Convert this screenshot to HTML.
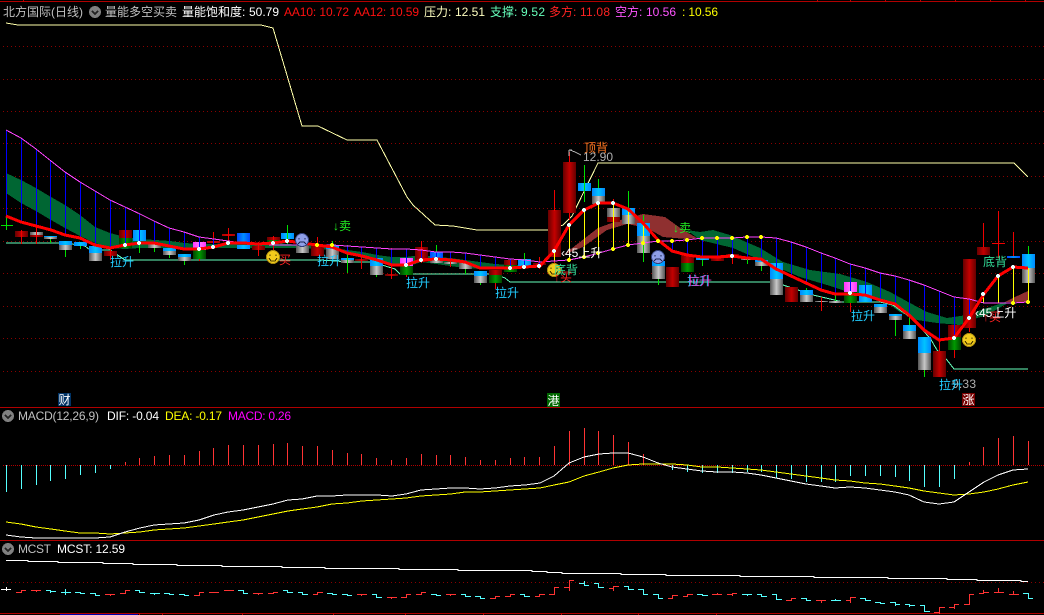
<!DOCTYPE html>
<html><head><meta charset="utf-8">
<style>
html,body{margin:0;padding:0;background:#000;width:1044px;height:615px;overflow:hidden}
svg{display:block;position:absolute;left:0;top:0}
text{font-family:"Liberation Sans","Noto Sans CJK SC",sans-serif;font-size:12px}
.r{fill:url(#gr)}.g{fill:url(#gg)}.b{fill:url(#gb)}.y{fill:url(#gy)}.m{fill:url(#gm)}.u{fill:url(#gu)}
</style></head><body>
<svg width="1044" height="615" viewBox="0 0 1044 615" xmlns="http://www.w3.org/2000/svg">
<defs>
<linearGradient id="gr"><stop offset="0" stop-color="#660000"/><stop offset=".5" stop-color="#c40000"/><stop offset="1" stop-color="#660000"/></linearGradient>
<linearGradient id="gg"><stop offset="0" stop-color="#004400"/><stop offset=".5" stop-color="#009a00"/><stop offset="1" stop-color="#004400"/></linearGradient>
<linearGradient id="gb"><stop offset="0" stop-color="#0088ff"/><stop offset=".5" stop-color="#00c4ff"/><stop offset="1" stop-color="#0088ff"/></linearGradient>
<linearGradient id="gy"><stop offset="0" stop-color="#555"/><stop offset=".5" stop-color="#c8c8c8"/><stop offset="1" stop-color="#555"/></linearGradient>
<linearGradient id="gm"><stop offset="0" stop-color="#ff33ff"/><stop offset=".5" stop-color="#ff77ff"/><stop offset="1" stop-color="#ff33ff"/></linearGradient>
<linearGradient id="gu"><stop offset="0" stop-color="#0044ff"/><stop offset=".5" stop-color="#0090ff"/><stop offset="1" stop-color="#0044ff"/></linearGradient>
</defs>
<g shape-rendering="crispEdges">
<!-- frame -->
<path d="M0 1.5H1044M0 407.5H1044M0 540.5H1044M0 613.5H1044" stroke="#b00000" fill="none"/>
<path d="M23.5 0V2M817.5 0V2M850.5 0V2M885.5 0V2M920.5 0V2M955.5 0V2M990.5 0V2M1025.5 0V2M139.5 613V615M162.5 613V615M242.5 613V615M333.5 613V615M405.5 613V615M483.5 613V615M561.5 613V615M638.5 613V615M716.5 613V615" stroke="#c00000"/>
<path d="M60 614.5H138" stroke="#0000aa"/>
<!-- grid -->
<path d="M3 46.5H1044M3 79.5H1044M3 111.5H1044M3 143.5H1044M3 176.5H1044M3 208.5H1044M3 241.5H1044M3 273.5H1044M3 306.5H1044M3 338.5H1044M3 371.5H1044M3 582.5H1044" stroke="#8a0000" stroke-dasharray="1 3" fill="none"/>
<path d="M3 465.5H1044" stroke="#b00000" stroke-dasharray="1 1" fill="none"/>
<!-- pressure line -->
<polyline fill="none" stroke="#ffffaa" points="6,23 18,25 261,25 273,28 302,126 318,126 347,140 377,140 407,197 413,205 435,225 453,226 477,230 550,230 563,225 572,216 598,163 1014,163 1028,177"/>
<!-- bands -->
<polygon fill="#006633" points="6,173 21,180 36,188 51,197 65,205 80,215 95,227 110,233 125,237 140,239 155,240 170,241 185,243 199,244 214,244 228,243 243,243 258,243 273,243 288,244 302,245 317,246 332,248 347,250 362,252 377,255 392,257 406,257 421,255 436,257 450,258 465,260 480,262 495,264 510,265 525,265 540,267 525,268 510,268 495,269 480,269 465,268 450,266 436,264 421,262 406,267 392,264 377,262 362,258 347,252 332,250 317,249 302,248 288,248 273,248 258,248 243,248 228,248 214,248 199,248 185,248 170,248 155,248 140,248 125,249 110,248 95,243 80,236 65,228 51,220 36,211 21,203 6,193"/>
<polygon fill="#006633" points="687,230 700,232 713,230 730,235 760,248 783,262 810,270 840,274 867,282 890,292 910,303 927,312 947,318 967,315 987,308 1005,302 1008,303 985,316 977,318 960,325 937,323 917,320 900,312 883,300 857,295 827,285 800,277 767,263 733,248 700,240"/>
<polygon fill="#8f3030" points="563,255 580,242 598,228 617,221 643,214 665,217 683,230 697,238 687,239 663,237 647,228 627,224 607,230 583,247"/>
<polygon fill="#8f3030" points="1005,302 1015,297 1028,291 1028,302"/>
<!-- support line -->
<polyline fill="none" stroke="#66ffbb" points="6,243 60,243 65,243 85,246 90,250 110,250 125,260 320,260 350,262 372,262 395,269 400,274 495,274 505,278 510,282 770,282 783,285 813,295 843,302 880,302 893,305 907,315 913,320 930,338 937,350 947,360 954,369 1028,369"/>
<!-- candles -->
<rect x="15" y="231" width="13" height="6" class="r"/>
<rect x="30" y="232" width="13" height="3" class="y"/><rect x="30" y="235" width="13" height="2" class="r"/>
<rect x="44" y="236" width="13" height="1" class="b"/><rect x="44" y="237" width="13" height="2" class="y"/>
<rect x="59" y="241" width="13" height="4" class="b"/><rect x="59" y="245" width="13" height="5" class="y"/>
<rect x="74" y="242" width="13" height="4" class="b"/>
<rect x="89" y="246" width="13" height="7" class="b"/><rect x="89" y="253" width="13" height="8" class="y"/>
<rect x="104" y="251" width="13" height="5" class="r"/>
<rect x="119" y="230" width="13" height="8" class="r"/><rect x="119" y="238" width="13" height="10" class="g"/>
<rect x="133" y="230" width="13" height="11" class="b"/>
<rect x="148" y="244" width="13" height="4" class="y"/>
<rect x="163" y="248" width="13" height="3" class="b"/><rect x="163" y="251" width="13" height="4" class="y"/>
<rect x="178" y="254" width="13" height="3" class="b"/><rect x="178" y="257" width="13" height="4" class="y"/>
<rect x="193" y="242" width="13" height="8" class="m"/><rect x="193" y="250" width="13" height="9" class="g"/>
<rect x="207" y="241" width="13" height="2" class="r"/>
<rect x="222" y="234" width="13" height="2" class="r"/>
<rect x="237" y="233" width="13" height="9" class="u"/><rect x="237" y="245" width="13" height="4" class="b"/>
<rect x="252" y="246" width="13" height="4" class="r"/>
<rect x="267" y="237" width="13" height="3" class="r"/><rect x="267" y="240" width="13" height="5" class="g"/>
<rect x="281" y="233" width="13" height="6" class="b"/>
<rect x="296" y="246" width="13" height="7" class="y"/>
<rect x="311" y="246" width="13" height="10" class="r"/>
<rect x="326" y="245" width="13" height="4" class="b"/><rect x="326" y="249" width="13" height="10" class="y"/>
<rect x="341" y="258" width="13" height="2" class="b"/><rect x="341" y="260" width="13" height="3" class="y"/>
<rect x="355" y="259" width="13" height="2" class="r"/>
<rect x="370" y="258" width="13" height="8" class="b"/><rect x="370" y="266" width="13" height="9" class="y"/>
<rect x="385" y="274" width="13" height="2" class="r"/>
<rect x="400" y="258" width="13" height="8" class="m"/><rect x="400" y="266" width="13" height="9" class="g"/>
<rect x="415" y="247" width="13" height="15" class="r"/>
<rect x="430" y="252" width="13" height="6" class="u"/><rect x="430" y="258" width="13" height="5" class="y"/>
<rect x="444" y="262" width="13" height="2" class="y"/>
<rect x="459" y="263" width="13" height="6" class="y"/>
<rect x="474" y="271" width="13" height="5" class="b"/><rect x="474" y="276" width="13" height="7" class="y"/>
<rect x="489" y="270" width="13" height="5" class="r"/><rect x="489" y="275" width="13" height="8" class="g"/>
<rect x="504" y="260" width="13" height="5" class="r"/><rect x="504" y="265" width="13" height="7" class="g"/>
<rect x="518" y="259" width="13" height="8" class="b"/>
<rect x="533" y="263" width="13" height="2" class="r"/>
<rect x="548" y="210" width="13" height="47" class="r"/>
<rect x="563" y="162" width="13" height="51" class="r"/>
<rect x="578" y="183" width="13" height="8" class="b"/>
<rect x="592" y="188" width="13" height="8" class="b"/><rect x="592" y="196" width="13" height="8" class="y"/>
<rect x="607" y="208" width="13" height="9" class="y"/><rect x="607" y="217" width="13" height="5" class="r"/>
<rect x="622" y="208" width="13" height="7" class="b"/><rect x="622" y="215" width="13" height="9" class="y"/>
<rect x="637" y="223" width="13" height="13" class="b"/><rect x="637" y="236" width="13" height="17" class="y"/>
<rect x="652" y="261" width="13" height="5" class="b"/><rect x="652" y="266" width="13" height="13" class="y"/>
<rect x="666" y="267" width="13" height="20" class="r"/>
<rect x="681" y="255" width="13" height="8" class="r"/><rect x="681" y="263" width="13" height="9" class="g"/>
<rect x="696" y="257" width="13" height="3" class="b"/>
<rect x="711" y="257" width="13" height="4" class="r"/>
<rect x="726" y="254" width="13" height="4" class="r"/>
<rect x="741" y="257" width="13" height="3" class="y"/>
<rect x="755" y="260" width="13" height="2" class="b"/><rect x="755" y="262" width="13" height="4" class="y"/>
<rect x="770" y="263" width="13" height="16" class="b"/><rect x="770" y="279" width="13" height="16" class="y"/>
<rect x="785" y="287" width="13" height="15" class="r"/>
<rect x="800" y="290" width="13" height="5" class="b"/><rect x="800" y="295" width="13" height="7" class="y"/>
<rect x="815" y="301" width="13" height="1" class="y"/>
<rect x="829" y="301" width="13" height="2" class="y"/>
<rect x="844" y="282" width="13" height="10" class="m"/><rect x="844" y="292" width="13" height="11" class="g"/>
<rect x="859" y="285" width="13" height="17" class="b"/>
<rect x="874" y="304" width="13" height="3" class="b"/><rect x="874" y="307" width="13" height="6" class="y"/>
<rect x="889" y="314" width="13" height="2" class="b"/><rect x="889" y="316" width="13" height="4" class="y"/>
<rect x="903" y="325" width="13" height="6" class="b"/><rect x="903" y="331" width="13" height="8" class="y"/>
<rect x="918" y="337" width="13" height="16" class="b"/><rect x="918" y="353" width="13" height="17" class="y"/>
<rect x="933" y="351" width="13" height="26" class="r"/>
<rect x="948" y="325" width="13" height="12" class="r"/><rect x="948" y="337" width="13" height="13" class="g"/>
<rect x="963" y="259" width="13" height="69" class="r"/>
<rect x="977" y="247" width="13" height="8" class="r"/>
<rect x="992" y="243" width="13" height="1" fill="#c00000"/>
<rect x="1007" y="256" width="13" height="2" class="u"/>
<rect x="1022" y="254" width="13" height="14" class="b"/><rect x="1022" y="268" width="13" height="15" class="y"/>
<!-- wicks -->
<path fill="none" stroke="#f00000" d="M21.5 230V244M36.5 227V244M110.5 247V260M199.5 259V261M213.5 232V248M207 242H220M228.5 228V245M222 235H235M258.5 242V256M273.5 236V250M317.5 237V246M361.5 247V269M391.5 248V279M406.5 275V277M421.5 241V263M450.5 252V267M495.5 283V289M539.5 257V269M554.5 190V211M554.5 257V270M569.5 152V162M569.5 213V220M613.5 199V208M732.5 258V264M821.5 297V311M850.5 303V312M954.5 350V358M969.5 328V332M983.5 223V247M998.5 211V258M992 243.5H1005M1013.5 232V256M939.5 320V351"/>
<path fill="none" stroke="#00e000" d="M6.5 212V230M1 225.5H13M50.5 239V243M65.5 250V257M80.5 246V249M139.5 241V253M154.5 248V252M169.5 255V258M184.5 261V265M287.5 225V244M332.5 241V244M347.5 245V273M376.5 275V277M436.5 245V252M465.5 253V263M465.5 269V274M480.5 283V285M524.5 253V267M584.5 165V202M598.5 179V188M628.5 191V208M643.5 215V262M658.5 279V285M702.5 260V266M747.5 258V264M761.5 266V271M806.5 288V290M835.5 295V301M895.5 320V336M909.5 317V325M924.5 370V377M1028.5 246V254"/>
<!-- stems -->
<path fill="none" stroke="#0000ff" d="M6.5 130V216M21.5 138V222M36.5 149V226M50.5 161V230M65.5 172V235M80.5 182V238M95.5 191V245M110.5 200V248M125.5 207V245M139.5 214V243M154.5 221V243M169.5 228V246M184.5 232V249M199.5 237V249M213.5 239V247M228.5 241V243M258.5 244V245M302.5 245V246M332.5 245V247M347.5 246V253M361.5 247V256M376.5 248V260M391.5 249V265M406.5 249V265M421.5 250V260M436.5 252V259M450.5 252V260M465.5 253V262M480.5 255V268M495.5 257V268M510.5 259V268M524.5 260V267M539.5 262V266M672.5 241V251M687.5 240V255M702.5 238V257M717.5 238V257M732.5 238V256M747.5 237V258M761.5 237V259M776.5 238V269M791.5 242V276M806.5 247V283M821.5 253V290M835.5 258V294M850.5 264V294M865.5 268V295M880.5 273V300M895.5 276V304M909.5 280V315M924.5 285V330M939.5 291V340M954.5 297V338M969.5 299V318"/>
<path fill="none" stroke="#ffff00" d="M554.5 251V261M569.5 225V260M584.5 210V257M598.5 203V253M613.5 203V249M628.5 209V245M643.5 223V243M983.5 294V303M998.5 276V303M1013.5 267V303M1028.5 268V302"/>
<!-- magenta line -->
<polyline fill="none" stroke="#ff44ff" points="6,130 21,138 36,149 51,161 65,172 80,182 95,191 110,200 125,207 140,214 154,221 169,228 184,232 199,237 214,239 228,241 243,243 258,244 273,245 288,245 302,245 317,245 332,245 347,246 362,247 377,248 392,249 406,249 421,250 436,252 451,252 465,253 480,255 495,257 510,259 525,260 540,262 554,261 569,260 584,257 599,253 613,249 628,245 643,243 658,241 672,241 687,240 702,238 717,238 732,238 747,237 761,237 776,238 791,242 806,247 821,253 835,258 850,264 865,268 880,273 895,276 909,280 924,285 939,291 954,297 969,299 984,303 998,303 1013,303 1028,302"/>
<!-- red line -->
<polyline fill="none" stroke="#ff0000" stroke-width="3" points="6,216 21,222 36,226 51,230 65,235 80,238 95,245 110,248 125,245 140,243 154,243 169,246 184,249 199,249 214,247 228,243 243,243 258,244 273,243 288,241 302,243 317,245 332,247 347,253 362,256 377,260 392,265 406,265 421,260 436,259 451,260 465,262 480,268 495,268 510,268 525,267 540,266 554,251 569,225 584,210 599,203 613,203 628,209 643,223 658,240 672,251 687,255 702,257 717,257 732,256 747,258 761,259 776,269 791,276 806,283 821,290 835,294 850,294 865,295 880,300 895,304 909,315 924,330 939,340 954,338 969,318 984,294 998,276 1013,267 1028,268"/>
<!-- dots -->
<g fill="#e8ffff">
<circle cx="125" cy="245" r="2"/><circle cx="139" cy="243" r="2"/><circle cx="199" cy="249" r="2"/><circle cx="213" cy="247" r="2"/><circle cx="228" cy="243" r="2"/><circle cx="273" cy="243" r="2"/><circle cx="287" cy="241" r="2"/><circle cx="406" cy="265" r="2"/><circle cx="421" cy="260" r="2"/><circle cx="436" cy="259" r="2"/><circle cx="510" cy="268" r="2"/><circle cx="524" cy="267" r="2"/><circle cx="539" cy="266" r="2"/><circle cx="554" cy="251" r="2"/><circle cx="569" cy="225" r="2"/><circle cx="584" cy="210" r="2"/><circle cx="598" cy="203" r="2"/><circle cx="613" cy="203" r="2"/><circle cx="732" cy="256" r="2"/><circle cx="850" cy="293" r="2"/><circle cx="954" cy="338" r="2"/><circle cx="969" cy="318" r="2"/><circle cx="983" cy="294" r="2"/><circle cx="998" cy="276" r="2"/><circle cx="1013" cy="267" r="2"/>
</g>
<g fill="#ffff00">
<circle cx="317" cy="245" r="2"/><circle cx="332" cy="245" r="2"/><circle cx="569" cy="260" r="2"/><circle cx="584" cy="257" r="2"/><circle cx="598" cy="253" r="2"/><circle cx="613" cy="249" r="2"/><circle cx="628" cy="245" r="2"/><circle cx="643" cy="243" r="2"/><circle cx="658" cy="241" r="2"/><circle cx="672" cy="241" r="2"/><circle cx="687" cy="240" r="2"/><circle cx="702" cy="238" r="2"/><circle cx="717" cy="238" r="2"/><circle cx="732" cy="238" r="2"/><circle cx="747" cy="237" r="2"/><circle cx="761" cy="237" r="2"/><circle cx="1013" cy="303" r="2"/><circle cx="1028" cy="302" r="2"/>
</g>
<!-- smileys -->
<g fill="#f2cc1c" stroke="#a98a10">
<circle cx="273" cy="257" r="6.5"/><circle cx="554" cy="270" r="6.5"/><circle cx="969" cy="340" r="6.5"/>
</g>
<g fill="none" stroke="#4a3a00">
<path d="M270 254.5V256M276 254.5V256M269 258L271 261H275L277 258M551 267.5V269M557 267.5V269M550 271L552 274H556L558 271M966 337.5V339M972 337.5V339M965 341L967 344H971L973 341"/>
</g>
<g fill="#8f9fe8" stroke="#33407a">
<circle cx="302" cy="240" r="6.5"/><circle cx="658" cy="257" r="6.5"/>
</g>
<g fill="none" stroke="#1b2450">
<path d="M299 238V239.5M305 238V239.5M298 244L300 242H304L306 244M655 255V256.5M661 255V256.5M654 261L656 259H660L662 261"/>
</g>
<!-- arrow to price -->
<path fill="none" stroke="#bbbbbb" d="M569 150V156M569 150H572M570 150L575 152L581 155"/>
<!-- badges -->
<rect x="58" y="393" width="13" height="13" fill="#003366"/>
<rect x="547" y="393" width="13" height="14" fill="#006600"/>
<rect x="962" y="393" width="13" height="13" fill="#770000"/>
<!-- header icons -->
<circle cx="95" cy="12" r="6" fill="#808080"/>
<circle cx="8" cy="416" r="6" fill="#808080"/>
<circle cx="8" cy="549" r="6" fill="#808080"/>
<path fill="none" stroke="#222" stroke-width="1.5" d="M92 11L95 14L98 11M5 415L8 418L11 415M5 548L8 551L11 548"/>
<!-- MACD histogram -->
<path fill="none" stroke="#55ffff" d="M6.5 465V492M21.5 465V489M36.5 465V485M50.5 465V481M65.5 465V479M80.5 465V475M95.5 465V473M110.5 465V469M672.5 465V470M687.5 465V472M702.5 465V473M717.5 465V473M732.5 465V473M747.5 465V472M761.5 465V472M776.5 465V478M791.5 465V479M806.5 465V482M821.5 465V482M835.5 465V482M850.5 465V476M865.5 465V476M880.5 465V476M895.5 465V477M909.5 465V481M924.5 465V487M939.5 465V487M954.5 465V479"/>
<path fill="none" stroke="#ff3333" d="M125.5 462V465M139.5 458V465M154.5 456V465M169.5 455V465M184.5 455V465M199.5 451V465M213.5 448V465M228.5 445V465M243.5 445V465M258.5 445V465M273.5 444V465M287.5 443V465M302.5 446V465M317.5 446V465M332.5 450V465M347.5 453V465M361.5 454V465M376.5 458V465M391.5 460V465M406.5 458V465M421.5 454V465M436.5 455V465M450.5 455V465M465.5 457V465M480.5 460V465M495.5 460V465M510.5 458V465M524.5 457V465M539.5 457V465M554.5 446V465M569.5 431V465M584.5 428V465M598.5 431V465M613.5 435V465M628.5 442V465M643.5 454V465M969.5 462V465M983.5 447V465M998.5 438V465M1013.5 436V465M1028.5 441V465"/>
<!-- DEA / DIF -->
<polyline fill="none" stroke="#ffff00" points="6,522 21,524 36,527 51,529 65,531 80,533 95,533 110,534 125,533 140,532 154,530 169,529 184,528 199,526 214,524 228,522 243,520 258,517 273,514 288,511 302,509 317,507 332,504 347,503 362,501 377,500 392,499 406,498 421,496 436,495 451,494 465,492 480,492 495,491 510,490 525,489 540,488 554,485 569,482 584,476 599,472 613,468 628,465 643,464 658,464 672,464 687,465 702,467 717,467 732,468 747,469 761,470 776,472 791,474 806,476 821,478 835,480 850,481 865,483 880,484 895,486 909,488 924,491 939,493 954,495 969,494 984,492 998,489 1013,485 1028,482"/>
<polyline fill="none" stroke="#ffffff" points="6,535 21,537 36,538 51,538 65,538 80,538 95,538 110,537 125,532 140,528 154,525 169,524 184,523 199,520 214,515 228,512 243,510 258,507 273,504 288,500 302,499 317,496 332,496 347,495 362,495 377,495 392,496 406,494 421,490 436,489 451,488 465,488 480,489 495,488 510,486 525,485 540,483 554,476 569,463 584,457 599,454 613,453 628,453 643,457 658,463 672,467 687,469 702,471 717,472 732,472 747,473 761,475 776,478 791,481 806,484 821,486 835,488 850,487 865,488 880,490 895,492 909,495 924,502 939,504 954,502 969,492 984,482 998,475 1013,470 1028,469"/>
<!-- MCST line -->
<path fill="none" stroke="#ffffff" d="M6 560.5H28V561.5H58V562.5H103V563.5H133V564.5H177V565.5H222V566.5H282V567.5H325V568.5H399V569.5H458V570.5H532V571.5H547V572.5H562V573.5H621V574.5H666V575.5H740V576.5H814V577.5H888V578.5H947V579.5H977V580.5H1021V581.5H1028"/>
<path fill="none" stroke="#ffffff" d="M1 589.5H11M6.5 587V591"/>
<path fill="none" stroke="#ff3333" d="M16 592.5H21.5V590.5H26M31 590.5H41M36.5 590V592M105 594.5H115M110.5 594V596M120 593.5H125.5V590.5H130M194 595.5H199.5V592.5H204M209 592.5H219M224 590.5H234M253 593.5H263M258.5 593V595M268 593.5H273.5V592.5H278M313 594.5H317.5V592.5H323M357 594.5H367M361.5 594V596M387 597.5H397M391.5 597V599M401 597.5H406.5V594.5H411M416 594.5H421.5V592.5H426M446 594.5H456M450.5 594V596M490 598.5H495.5V596.5H500M505 596.5H510.5V594.5H515M535 596.5H539.5V594.5H545M549 594.5H554.5V587.5H559M564 587.5H569.5V580.5H574M569.5 580V591M609 588.5H613.5V586.5H619M613.5 586V591M668 598.5H672.5V595.5H678M683 596.5H687.5V594.5H693M712 594.5H722M717.5 593V595M727 594.5H732.5V593.5H737M732.5 594V596M786 600.5H791.5V598.5H796M816 600.5H826M821.5 600V603M846 600.5H850.5V597.5H856M850.5 597V603M934 612.5H939.5V607.5H945M939.5 607V614M949 607.5H954.5V604.5H959M954.5 604V609M964 604.5H969.5V594.5H974M979 593.5H983.5V592.5H989M983.5 590V593M994 592.5H1004M998.5 588V592M1009 594.5H1019M1013.5 591V594"/>
<path fill="none" stroke="#55ffff" d="M46 590.5H50.5V591.5H56M50.5 591V593M61 592.5H71M65.5 589V595M75 592.5H80.5V593.5H85M90 593.5H95.5V595.5H100M135 590.5H139.5V592.5H145M150 593.5H160M154.5 593V595M164 593.5H169.5V594.5H174M179 594.5H184.5V595.5H189M238 590.5H243.5V593.5H248M283 590.5H287.5V592.5H293M298 592.5H302.5V594.5H308M327 593.5H332.5V594.5H337M342 594.5H347.5V595.5H352M372 594.5H376.5V597.5H382M431 594.5H436.5V595.5H441M461 594.5H465.5V596.5H471M475 596.5H480.5V598.5H485M520 594.5H524.5V596.5H530M579 583.5H584.5V585.5H589M584.5 581V586M594 583.5H598.5V587.5H604M624 586.5H628.5V589.5H634M638 589.5H643.5V594.5H648M653 594.5H658.5V598.5H663M697 594.5H702.5V595.5H708M702.5 594V596M742 594.5H752M747.5 594V596M757 594.5H761.5V596.5H767M772 594.5H776.5V599.5H782M801 598.5H806.5V600.5H811M831 600.5H841M835.5 599V600M860 598.5H865.5V600.5H871M865.5 598V601M875 602.5H880.5V603.5H885M890 602.5H895.5V604.5H900M895.5 603V606M905 604.5H909.5V605.5H915M909.5 604V607M920 605.5H924.5V611.5H930M1023 593.5H1028.5V598.5H1033"/>
</g>
<!-- header text -->
<text x="3" y="16" fill="#c0c0c0">北方国际(日线)</text>
<text x="105" y="16" fill="#c0c0c0">量能多空买卖</text>
<text x="182" y="16" fill="#ffffff">量能饱和度:</text>
<text x="249" y="16" fill="#ffffff" textLength="30">50.79</text>
<text x="284" y="16" fill="#ff1010" textLength="65">AA10: 10.72</text>
<text x="354" y="16" fill="#ff1010" textLength="65">AA12: 10.59</text>
<text x="424" y="16" fill="#ffffc0">压力:</text>
<text x="455" y="16" fill="#ffffc0" textLength="30">12.51</text>
<text x="490" y="16" fill="#66ffbb">支撑:</text>
<text x="521" y="16" fill="#66ffbb" textLength="24">9.52</text>
<text x="549" y="16" fill="#ff2222">多方:</text>
<text x="580" y="16" fill="#ff2222" textLength="30">11.08</text>
<text x="615" y="16" fill="#ff55ff">空方:</text>
<text x="646" y="16" fill="#ff55ff" textLength="30">10.56</text>
<text x="682" y="16" fill="#ffff00" textLength="36">: 10.56</text>
<!-- sub panels text -->
<text x="18" y="420" fill="#c0c0c0" textLength="81">MACD(12,26,9)</text>
<text x="107" y="420" fill="#ffffff" textLength="52">DIF: -0.04</text>
<text x="165" y="420" fill="#ffff00" textLength="57">DEA: -0.17</text>
<text x="228" y="420" fill="#ff00ff" textLength="63">MACD: 0.26</text>
<text x="18" y="553" fill="#c0c0c0" textLength="33">MCST</text>
<text x="57" y="553" fill="#ffffff" textLength="68">MCST: 12.59</text>
<!-- chart labels -->
<text x="584" y="152" fill="#ff7722">顶背</text>
<text x="583" y="161" fill="#b0b0b0" textLength="30">12.90</text>
<text x="110" y="266" fill="#22ccff">拉升</text>
<text x="317" y="265" fill="#22ccff">拉升</text>
<text x="406" y="287" fill="#22ccff">拉升</text>
<text x="495" y="297" fill="#22ccff">拉升</text>
<text x="851" y="320" fill="#22ccff">拉升</text>
<text x="687" y="285" fill="#22ccff">拉升</text>
<text x="688" y="285" fill="#ff33cc" opacity=".8">拉升</text>
<text x="333" y="230" fill="#22ee22">↓卖</text>
<text x="673" y="232" fill="#22ee22">↓卖</text>
<text x="279" y="264" fill="#ff2020">买</text>
<text x="554" y="281" fill="#ff2020">↑买</text>
<text x="983" y="321" fill="#ff2020">↑买</text>
<text x="554" y="274" fill="#33dd99">底背</text>
<text x="983" y="266" fill="#33dd99">底背</text>
<text x="561" y="257" fill="#ffffff">‹45上升</text>
<text x="975" y="317" fill="#ffffff">‹45上升</text>
<text x="952" y="388" fill="#b0b0b0" textLength="24">9.33</text>
<text x="939" y="389" fill="#22ccff">拉升</text>
<text x="58.500" y="404" fill="#ffffff">财</text>
<text x="547.500" y="405" fill="#ffffff">港</text>
<text x="962.500" y="404" fill="#ffffff">涨</text>
</svg>
</body></html>
